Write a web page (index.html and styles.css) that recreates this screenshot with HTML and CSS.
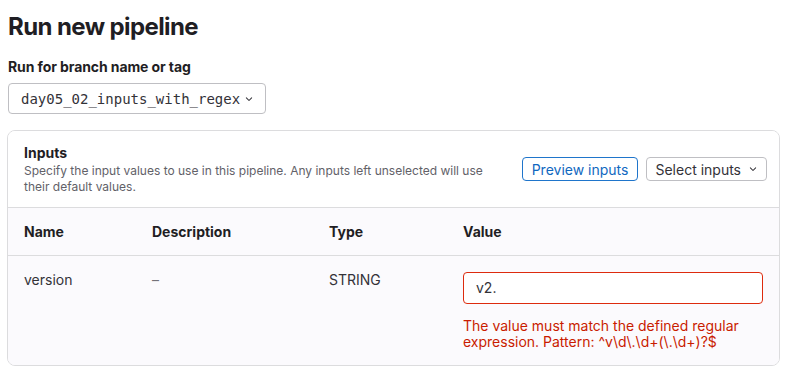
FILE: index.html
```html
<!DOCTYPE html>
<html>
<head>
<meta charset="utf-8">
<link rel="stylesheet" href="styles.css">
</head>
<body>
<main class="page">
  <h1 class="title">Run new pipeline</h1>
  <div class="field">
    <label class="label">Run for branch name or tag</label>
    <button class="ref-btn"><span class="mono">day05_02_inputs_with_regex</span>
      <svg class="chev" viewBox="0 0 16 16" width="12" height="12"><path d="M4.5 6.5 8 10l3.5-3.5" fill="none" stroke="currentColor" stroke-width="1.4" stroke-linecap="round" stroke-linejoin="round"/></svg>
    </button>
  </div>
  <section class="card">
    <div class="card-head">
      <div class="head-text">
        <div class="head-title">Inputs</div>
        <div class="head-desc">Specify the input values to use in this pipeline. Any inputs left unselected will use their default values.</div>
      </div>
      <div class="head-actions">
        <button class="btn btn-blue">Preview inputs</button>
        <button class="btn btn-default">Select inputs
          <svg class="chev" viewBox="0 0 16 16" width="12" height="12"><path d="M4.5 6.5 8 10l3.5-3.5" fill="none" stroke="currentColor" stroke-width="1.4" stroke-linecap="round" stroke-linejoin="round"/></svg>
        </button>
      </div>
    </div>
    <div class="table">
      <div class="row row-head">
        <div>Name</div>
        <div>Description</div>
        <div>Type</div>
        <div>Value</div>
      </div>
      <div class="row row-body">
        <div class="cell">version</div>
        <div class="cell dash">–</div>
        <div class="cell">STRING</div>
        <div class="value-cell">
          <div class="input">v2.</div>
          <div class="error">The value must match the defined regular expression. Pattern: ^v\d\.\d+(\.\d+)?$</div>
        </div>
      </div>
    </div>
  </section>
</main>
</body>
</html>
```

FILE: styles.css
```css
* { box-sizing: border-box; }
html, body { margin: 0; padding: 0; background: #fff; }
body {
  font-family: "Inter", "Noto Sans", sans-serif;
  color: #333238;
  font-size: 14px;
  line-height: 20px;
}
.page {
  padding: 11px 5px 0 7px;
}
.title {
  margin: 0 0 0 1px;
  font-size: 24px;
  line-height: 32px;
  font-weight: 700;
  color: #1f1e24;
  letter-spacing: -0.6px;
}
.field {
  margin-top: 14px;
  display: flex;
  flex-direction: column;
  align-items: flex-start;
}
.label {
  font-weight: 700;
  color: #1f1e24;
  margin-left: 1px;
  margin-bottom: 6px;
  letter-spacing: -0.1px;
}
.ref-btn {
  margin-left: 1px;
  height: 31px;
  width: 258px;
  display: flex;
  align-items: center;
  justify-content: space-between;
  padding: 0 10px 0 12px;
  background: #fff;
  border: 1px solid #bfbfc3;
  border-radius: 4px;
  color: #333238;
  font-family: inherit;
}
.mono {
  font-family: "DejaVu Sans Mono", "Liberation Mono", monospace;
  font-size: 14px;
}
.chev { color: #333238; flex: none; }
.card {
  margin-top: 16px;
  border: 1px solid #dcdcde;
  border-radius: 8px;
  overflow: hidden;
}
.card-head {
  display: flex;
  align-items: center;
  justify-content: space-between;
  padding: 12px 12px 12px 16px;
  border-bottom: 1px solid #dcdcde;
  background: #fff;
}
.head-text { max-width: 472px; }
.head-title {
  font-weight: 700;
  color: #1f1e24;
}
.head-desc {
  font-size: 12px;
  line-height: 16px;
  color: #626168;
}
.head-actions {
  display: flex;
  gap: 8px;
}
.btn {
  height: 24px;
  display: flex;
  align-items: center;
  gap: 6px;
  padding: 0 8px;
  border-radius: 4px;
  font-family: inherit;
  font-size: 14px;
  background: #fff;
}
.btn-blue {
  border: 1px solid #1f75cb;
  color: #1068bf;
  padding: 0 9px;
}
.btn-default {
  border: 1px solid #bfbfc3;
  color: #333238;
  padding: 0 7px 0 8px;
}
.table { background: #fbfafd; }
.row {
  display: grid;
  grid-template-columns: 128px 177px 134px 1fr;
  padding: 0 16px;
}
.row-head {
  height: 48px;
  align-items: center;
  font-weight: 700;
  color: #1f1e24;
  border-bottom: 1px solid #dcdcde;
}
.row-body {
  padding-top: 14px;
  padding-bottom: 15px;
}
.dash { color: #737278; }
.value-cell { padding-top: 2px; }
.input {
  height: 32px;
  border: 1px solid #dd2b0e;
  border-radius: 4px;
  background: #fff;
  padding: 5px 12px;
  color: #333238;
}
.error {
  margin-top: 14px;
  color: #c91c00;
  line-height: 16px;
}
```
